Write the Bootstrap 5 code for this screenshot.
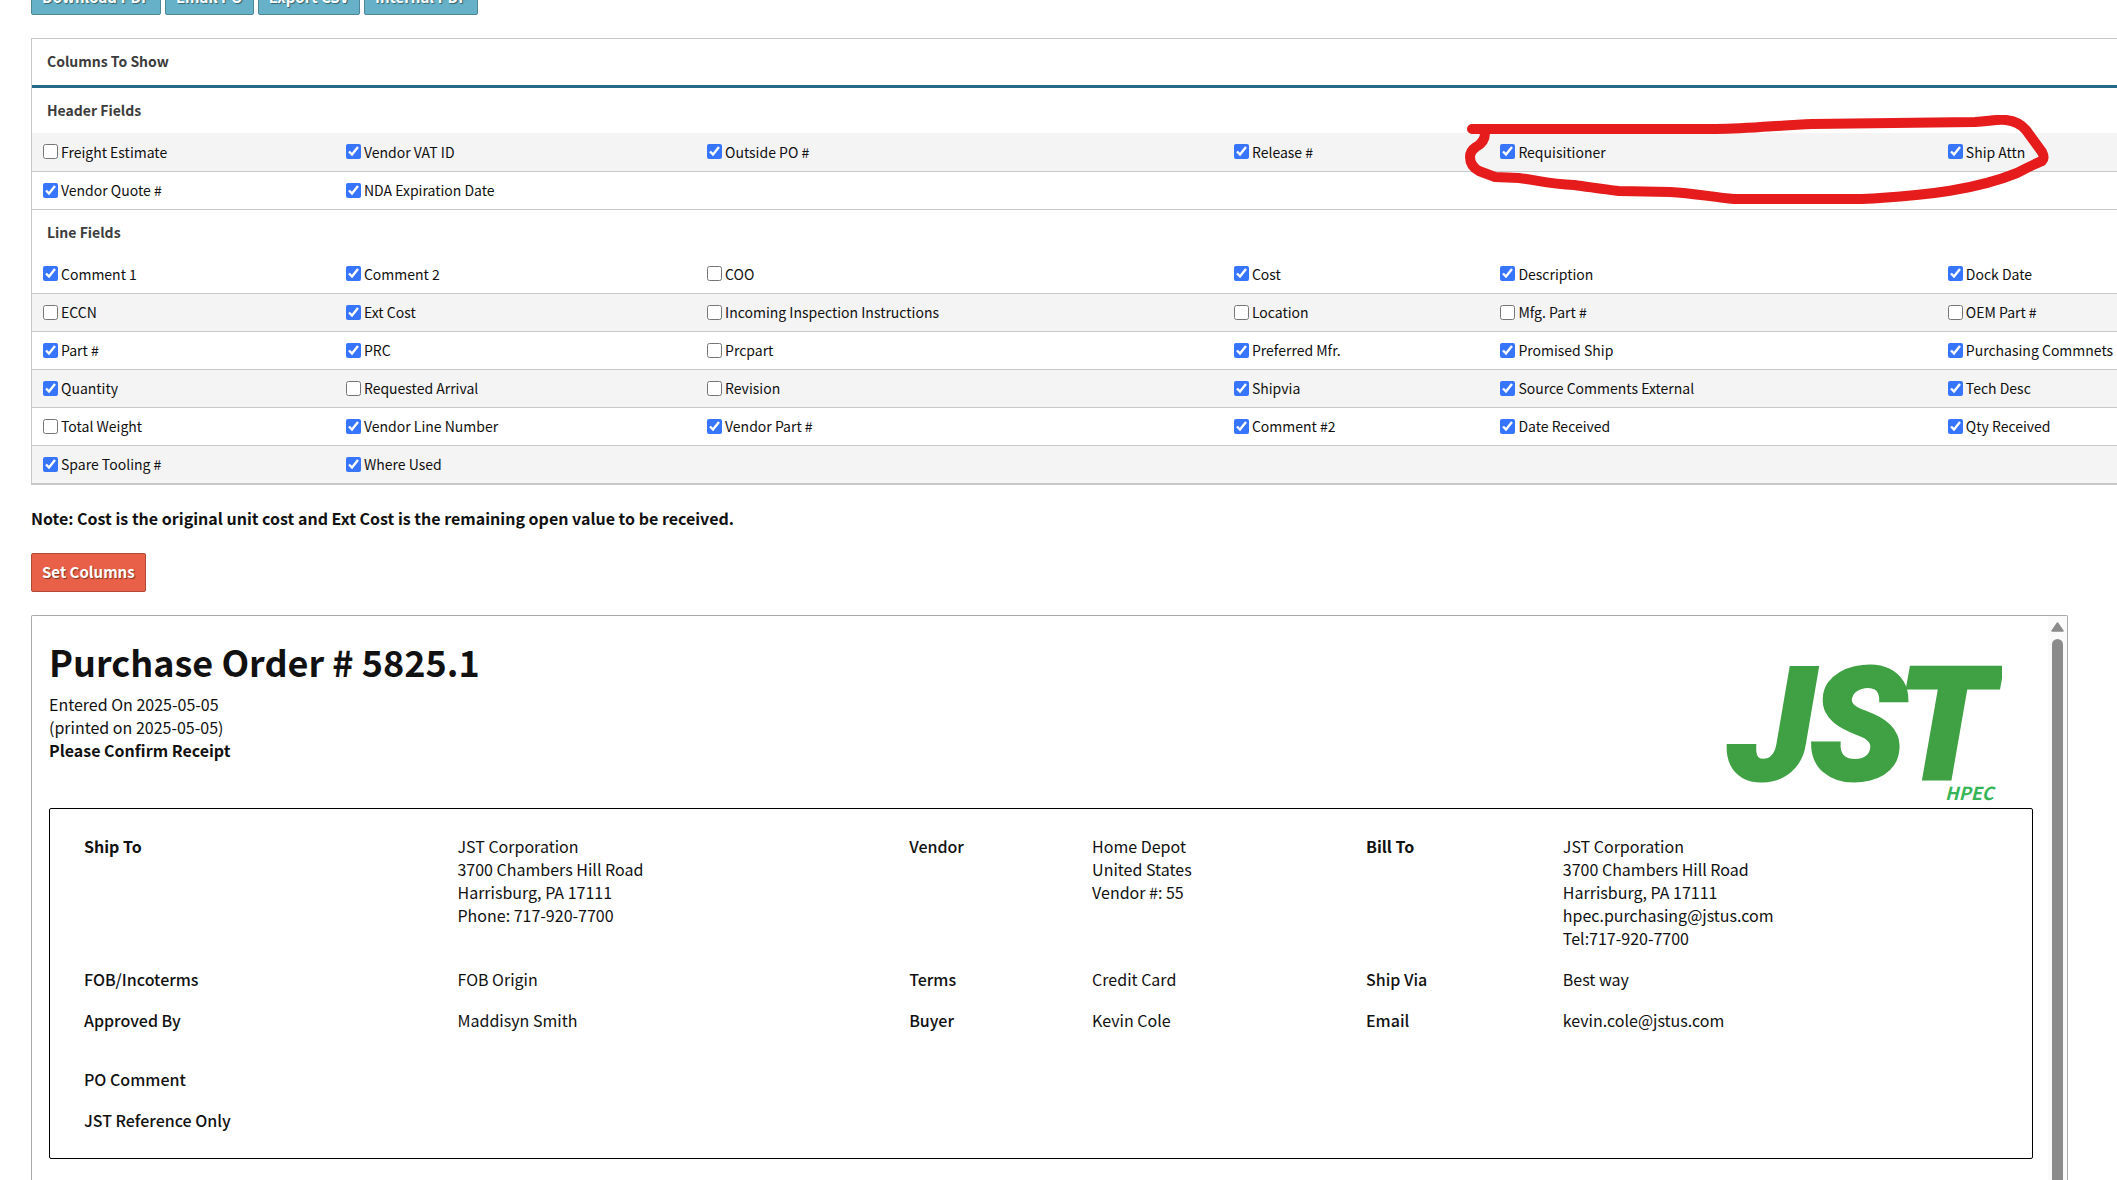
<!DOCTYPE html>
<html lang="en">
<head>
<meta charset="utf-8">
<meta name="viewport" content="width=device-width, initial-scale=1">
<title>Purchase Order # 5825.1</title>
<link href="https://cdn.jsdelivr.net/npm/bootstrap@5.3.0/dist/css/bootstrap.min.css" rel="stylesheet">
<style>
  body { font-family: "Noto Sans CJK SC", "Noto Sans", sans-serif; font-size: 16px; line-height: 23px; color: #111; background: #fff; height: 100vh; overflow: hidden; }
  .page-shell { height: calc(100vh + 24px); margin-top: -24px; padding-left: 31px; }
  .act-btn { height: 39px; padding: 0 10px; border-radius: 2px; font-size: 15px; font-weight: 700; line-height: 20px; color: #fff; text-shadow: 1px 1px 1px rgba(0,0,0,.45); }
  .act-btn:hover { color: #fff; }
  .act-teal { padding-top: 3px; background: #66b1c7; border: 1px solid #4e8797; }
  .act-red { padding-bottom: 2px; background: #e86047; border: 1px solid #b04a37; }
  .fields-panel { margin-top: 23px; border: 1px solid #c8c8c8; border-right: 0; border-bottom-width: 2px; font-size: 14px; }
  .fields-title { height: 49px; padding-left: 15px; border-bottom: 3px solid #236a8b; color: #3c3c3c; font-weight: 700; line-height: 45px; }
  .fields-grid { table-layout: fixed; width: 100%; }
  .fields-grid th { height: 46px; padding: 0 0 0 15px; color: #3c3c3c; font-weight: 700; }
  .fields-grid tr:first-child th { height: 45px; }
  .fields-grid td { height: 38px; padding: 0 0 0 11px; border-bottom: 1px solid #c8c8c8; line-height: 20px; color: #111; white-space: nowrap; }
  .fields-grid tr:last-child td { border-bottom: 0; }
  .fields-grid tr:nth-child(even) td { background: #f4f4f4; }
  .fields-grid input { width: 15px; height: 15px; margin: 0; accent-color: #3875ff; }
  .fields-grid label { display: flex; align-items: center; gap: 3px; }
  .c1 { width: 14.53%; } .c2 { width: 17.32%; } .c3 { width: 25.27%; } .c4 { width: 12.78%; } .c5 { width: 21.46%; }
  .ink-circle { right: 60px; top: 76px; width: 600px; height: 130px; pointer-events: none; }
  .note-line { margin: 22px 0 23px; }
  .po-frame { margin: 23px 49px 0 0; border: 1px solid #aaa; border-bottom: 0; border-radius: 2px 2px 0 0; min-height: 0; }
  .po-doc { padding: 20px 15px 0 17px; overflow: hidden; }
  .po-title { font-size: 36px; line-height: 50px; font-weight: 700; margin: 0 0 7px; }
  .po-head { height: 172px; }
  .po-logo { width: 280px; height: 142px; margin: 27px 31px 0 0; }
  .po-box { border: 1px solid #000; border-radius: 2px; padding: 17px 0; }
  .po-info { width: 100%; table-layout: fixed; margin-bottom: 18px; }
  .po-info:last-child { margin-bottom: 0; }
  .po-info th, .po-info td { padding: 9px 0; vertical-align: top; }
  .po-info th { font-weight: 500; }
  .po-info th:first-child { padding-left: 34px; }
  .i1 { width: 20.56%; } .i2 { width: 22.79%; } .i3 { width: 9.23%; } .i4 { width: 13.82%; } .i5 { width: 9.93%; }
  .scroll-rail { width: 19px; background: #fafafa; padding-top: 6px; }
  .scroll-thumb { width: 11px; border-radius: 6px 6px 0 0; background: #8b8b8b; margin-top: 7px; }
</style>
<script src="https://cdn.jsdelivr.net/npm/bootstrap@5.3.0/dist/js/bootstrap.bundle.min.js"></script>
</head>
<body>
<main class="page-shell d-flex flex-column">
  <div class="d-flex gap-1 flex-shrink-0">
    <button type="button" class="btn act-btn act-teal">Download PDF</button>
    <button type="button" class="btn act-btn act-teal">Email PO</button>
    <button type="button" class="btn act-btn act-teal">Export CSV</button>
    <button type="button" class="btn act-btn act-teal">Internal PDF</button>
  </div>

  <section class="fields-panel position-relative flex-shrink-0">
    <div class="fields-title">Columns To Show</div>
    <table class="fields-grid">
      <colgroup><col class="c1"><col class="c2"><col class="c3"><col class="c4"><col class="c5"><col></colgroup>
      <tbody>
        <tr><th colspan="6">Header Fields</th></tr>
        <tr>
          <td><label><input type="checkbox">Freight Estimate</label></td>
          <td><label><input type="checkbox" checked>Vendor VAT ID</label></td>
          <td><label><input type="checkbox" checked>Outside PO #</label></td>
          <td><label><input type="checkbox" checked>Release #</label></td>
          <td><label><input type="checkbox" checked>Requisitioner</label></td>
          <td><label><input type="checkbox" checked>Ship Attn</label></td>
        </tr>
        <tr>
          <td><label><input type="checkbox" checked>Vendor Quote #</label></td>
          <td><label><input type="checkbox" checked>NDA Expiration Date</label></td>
          <td></td><td></td><td></td><td></td>
        </tr>
        <tr><th colspan="6">Line Fields</th></tr>
        <tr>
          <td><label><input type="checkbox" checked>Comment 1</label></td>
          <td><label><input type="checkbox" checked>Comment 2</label></td>
          <td><label><input type="checkbox">COO</label></td>
          <td><label><input type="checkbox" checked>Cost</label></td>
          <td><label><input type="checkbox" checked>Description</label></td>
          <td><label><input type="checkbox" checked>Dock Date</label></td>
        </tr>
        <tr>
          <td><label><input type="checkbox">ECCN</label></td>
          <td><label><input type="checkbox" checked>Ext Cost</label></td>
          <td><label><input type="checkbox">Incoming Inspection Instructions</label></td>
          <td><label><input type="checkbox">Location</label></td>
          <td><label><input type="checkbox">Mfg. Part #</label></td>
          <td><label><input type="checkbox">OEM Part #</label></td>
        </tr>
        <tr>
          <td><label><input type="checkbox" checked>Part #</label></td>
          <td><label><input type="checkbox" checked>PRC</label></td>
          <td><label><input type="checkbox">Prcpart</label></td>
          <td><label><input type="checkbox" checked>Preferred Mfr.</label></td>
          <td><label><input type="checkbox" checked>Promised Ship</label></td>
          <td><label><input type="checkbox" checked>Purchasing Commnets</label></td>
        </tr>
        <tr>
          <td><label><input type="checkbox" checked>Quantity</label></td>
          <td><label><input type="checkbox">Requested Arrival</label></td>
          <td><label><input type="checkbox">Revision</label></td>
          <td><label><input type="checkbox" checked>Shipvia</label></td>
          <td><label><input type="checkbox" checked>Source Comments External</label></td>
          <td><label><input type="checkbox" checked>Tech Desc</label></td>
        </tr>
        <tr>
          <td><label><input type="checkbox">Total Weight</label></td>
          <td><label><input type="checkbox" checked>Vendor Line Number</label></td>
          <td><label><input type="checkbox" checked>Vendor Part #</label></td>
          <td><label><input type="checkbox" checked>Comment #2</label></td>
          <td><label><input type="checkbox" checked>Date Received</label></td>
          <td><label><input type="checkbox" checked>Qty Received</label></td>
        </tr>
        <tr>
          <td><label><input type="checkbox" checked>Spare Tooling #</label></td>
          <td><label><input type="checkbox" checked>Where Used</label></td>
          <td></td><td></td><td></td><td></td>
        </tr>
      </tbody>
    </table>
    <!-- hand-drawn marker loop round Requisitioner and Ship Attn -->
    <svg class="ink-circle position-absolute" viewBox="1457 115 600 130" fill="none" stroke="#e61c1c" stroke-width="10" stroke-linecap="round" stroke-linejoin="round" aria-hidden="true">
      <path d="M1472 129H1716C1750 129 1780 125 1812 124L1975 122C1990 121 1998 119 2006 120C2015 121 2021 124 2026 130L2042 152Q2045 158 2042 161Q2034 164 2017 173C1975 190 1926 195 1880 198Q1866 199 1857 199H1734C1712 197 1692 193 1670 192L1619 191C1600 189 1590 187 1574 185C1550 184 1536 180 1519 178L1495 177L1479 171Q1470 166 1470 157Q1470 151 1476 147Q1485 142 1485 133"/>
    </svg>
  </section>

  <p class="note-line fw-bold flex-shrink-0">Note: Cost is the original unit cost and Ext Cost is the remaining open value to be received.</p>
  <div class="flex-shrink-0 d-flex"><button type="submit" class="btn act-btn act-red">Set Columns</button></div>

  <section class="po-frame d-flex flex-grow-1">
    <div class="po-doc flex-grow-1">
      <div class="po-head d-flex justify-content-between">
        <div>
          <h1 class="po-title">Purchase Order # 5825.1</h1>
          <div>Entered On 2025-05-05</div>
          <div>(printed on 2025-05-05)</div>
          <div class="fw-bold">Please Confirm Receipt</div>
        </div>
        <svg class="po-logo" viewBox="1722 663 280 142" role="img" aria-label="JST HPEC">
          <g font-family="Roboto, sans-serif" font-weight="900" font-style="italic" font-size="158" fill="#3fa143" stroke="#3fa143" stroke-width="3">
            <text x="1728" y="779">J</text><text x="1810" y="779">S</text><text x="1897" y="779">T</text>
          </g>
          <text x="1945" y="800" font-family="Noto Sans CJK SC, sans-serif" font-weight="700" font-style="italic" font-size="18" fill="#35b558">HPEC</text>
        </svg>
      </div>
      <div class="po-box">
        <table class="po-info">
          <colgroup><col class="i1"><col class="i2"><col class="i3"><col class="i4"><col class="i5"><col></colgroup>
          <tbody>
            <tr>
              <th class="fw-bold">Ship To</th><td>JST Corporation<br>3700 Chambers Hill Road<br>Harrisburg, PA 17111<br>Phone: 717-920-7700</td>
              <th>Vendor</th><td>Home Depot<br>United States<br>Vendor #: 55</td>
              <th class="fw-bold">Bill To</th><td>JST Corporation<br>3700 Chambers Hill Road<br>Harrisburg, PA 17111<br>hpec.purchasing@jstus.com<br>Tel:717-920-7700</td>
            </tr>
            <tr><th>FOB/Incoterms</th><td>FOB Origin</td><th>Terms</th><td>Credit Card</td><th>Ship Via</th><td>Best way</td></tr>
            <tr><th>Approved By</th><td>Maddisyn Smith</td><th>Buyer</th><td>Kevin Cole</td><th>Email</th><td>kevin.cole@jstus.com</td></tr>
          </tbody>
        </table>
        <table class="po-info">
          <tbody>
            <tr><th>PO Comment</th></tr>
            <tr><th>JST Reference Only</th></tr>
          </tbody>
        </table>
      </div>
    </div>
    <div class="scroll-rail d-flex flex-column align-items-center flex-shrink-0" aria-hidden="true">
      <svg width="13" height="10" viewBox="0 0 13 10"><path d="M6.5 1L12 9H1Z" fill="#8b8b8b" stroke="#8b8b8b" stroke-width="1.5" stroke-linejoin="round"/></svg>
      <div class="scroll-thumb flex-grow-1"></div>
    </div>
  </section>
</main>
</body>
</html>
